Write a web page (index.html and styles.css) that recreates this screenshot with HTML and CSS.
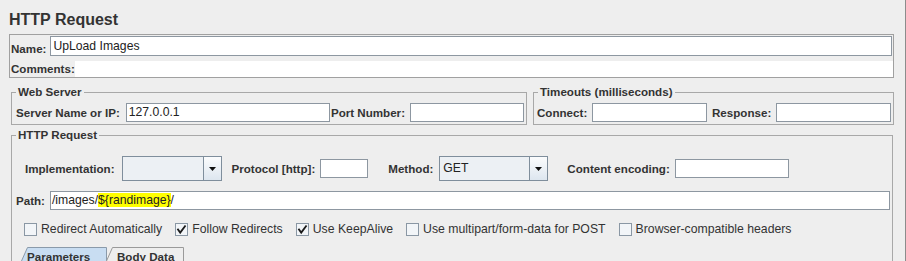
FILE: index.html
```html
<!DOCTYPE html>
<html>
<head>
<meta charset="utf-8">
<title>HTTP Request</title>
<link rel="stylesheet" href="styles.css">
</head>
<body>
<div class="page">
  <h1 class="title">HTTP Request</h1>
  <div class="namepanel">
    <div class="name-row">
      <span class="lbl">Name:</span>
      <div class="field name-field">UpLoad Images</div>
    </div>
    <div class="comments-row">
      <span class="lbl comments-lbl">Comments:</span>
      <div class="textarea"></div>
    </div>
  </div>

  <div class="servers">
    <fieldset class="group web">
      <legend>Web Server</legend>
      <div class="row">
        <span class="lbl">Server Name or IP:</span>
        <div class="field grow gap6">127.0.0.1</div>
        <span class="lbl gap1">Port Number:</span>
        <div class="field w114 gap5"></div>
      </div>
    </fieldset>
    <fieldset class="group timeouts">
      <legend>Timeouts (milliseconds)</legend>
      <div class="row">
        <span class="lbl">Connect:</span>
        <div class="field grow gap5"></div>
        <span class="lbl gap5">Response:</span>
        <div class="field grow gap5"></div>
      </div>
    </fieldset>
  </div>

  <fieldset class="group http">
    <legend>HTTP Request</legend>
    <div class="impl-row">
      <span class="lbl">Implementation:</span>
      <div class="combo impl-combo gap7">
        <span class="combo-text"></span>
        <span class="combo-btn"><svg width="7" height="4" viewBox="0 0 7 4"><polygon points="0,0 7,0 3.5,4" fill="#111"/></svg></span>
      </div>
      <span class="lbl gap10">Protocol [http]:</span>
      <div class="field proto gap5"></div>
      <span class="lbl gap20">Method:</span>
      <div class="combo method-combo gap6">
        <span class="combo-text">GET</span>
        <span class="combo-btn"><svg width="7" height="4" viewBox="0 0 7 4"><polygon points="0,0 7,0 3.5,4" fill="#111"/></svg></span>
      </div>
      <span class="lbl gap19">Content encoding:</span>
      <div class="field enc gap5"></div>
    </div>

    <div class="path-row">
      <span class="lbl">Path:</span>
      <div class="field grow gap5 path-field">/images/<mark class="hl">${randimage}</mark>/</div>
    </div>

    <div class="checks">
      <label class="check">
        <svg class="cb" width="13" height="13" viewBox="0 0 13 13"><rect x="0.5" y="0.5" width="12" height="12" class="cb-box"/></svg>
        <span>Redirect Automatically</span>
      </label>
      <label class="check">
        <svg class="cb" width="13" height="13" viewBox="0 0 13 13"><rect x="0.5" y="0.5" width="12" height="12" class="cb-box"/><path d="M3 6.5 L5.2 9.6 L10 3.2" class="cb-mark"/></svg>
        <span>Follow Redirects</span>
      </label>
      <label class="check">
        <svg class="cb" width="13" height="13" viewBox="0 0 13 13"><rect x="0.5" y="0.5" width="12" height="12" class="cb-box"/><path d="M3 6.5 L5.2 9.6 L10 3.2" class="cb-mark"/></svg>
        <span>Use KeepAlive</span>
      </label>
      <label class="check">
        <svg class="cb" width="13" height="13" viewBox="0 0 13 13"><rect x="0.5" y="0.5" width="12" height="12" class="cb-box"/></svg>
        <span>Use multipart/form-data for POST</span>
      </label>
      <label class="check">
        <svg class="cb" width="13" height="13" viewBox="0 0 13 13"><rect x="0.5" y="0.5" width="12" height="12" class="cb-box"/></svg>
        <span>Browser-compatible headers</span>
      </label>
    </div>

    <div class="tabs">
      <div class="tab tab-params selected">
        <svg class="tab-shape" width="86" height="30" viewBox="0 0 86 30"><polygon points="0.5,14 6.5,0.5 85.5,0.5 85.5,30 0.5,30" class="tab-fill-sel"/></svg>
        <span class="tab-text">Parameters</span>
      </div>
      <div class="tab tab-body">
        <svg class="tab-shape" width="78" height="30" viewBox="0 0 78 30"><polygon points="0.5,14 6.5,0.5 77.5,0.5 77.5,30 0.5,30" class="tab-fill"/></svg>
        <span class="tab-text">Body Data</span>
      </div>
    </div>
  </fieldset>
</div>
</body>
</html>
```

FILE: styles.css
```css
* { box-sizing: border-box; }
html, body { margin: 0; padding: 0; }
body {
  width: 906px;
  height: 261px;
  overflow: hidden;
  background: #eeeeee;
  font-family: "Liberation Sans", Arial, sans-serif;
  font-size: 12px;
  color: #333333;
}
.page {
  height: 261px;
  padding: 0 11px 0 9px;
  border-right: 1px solid #8c8c8c;
  overflow: hidden;
}
.title {
  margin: 0;
  height: 34px;
  padding-top: 10px;
  font-size: 16px;
  line-height: 20px;
  font-weight: bold;
  color: #333333;
}
.lbl {
  font-weight: bold;
  font-size: 11.6px;
  white-space: nowrap;
  line-height: 14px;
}
.field {
  height: 19px;
  background: #ffffff;
  border: 1px solid #8d97a1;
  padding: 0 2px;
  line-height: 17px;
  font-size: 12.2px;
  color: #222222;
  white-space: nowrap;
  overflow: hidden;
}
.grow { flex: 1 1 0; min-width: 0; }
.gap1 { margin-left: 1px; }
.gap5 { margin-left: 5px; }
.gap6 { margin-left: 6px; }
.gap7 { margin-left: 7px; }
.gap10 { margin-left: 10px; }
.gap19 { margin-left: 19px; }
.gap20 { margin-left: 20px; }
.w114 { width: 114px; flex: none; }

/* name / comments */
.namepanel {
  height: 44px;
  border: 1px solid #a0a0a0;
}
.name-row {
  display: flex;
  align-items: flex-end;
  height: 21px;
  padding-left: 1px;
}
.name-field {
  flex: 1 1 0;
  height: 20px;
  line-height: 18px;
  margin-left: 4px;
  margin-right: 1px;
}
.comments-row {
  display: flex;
  align-items: flex-end;
  height: 21px;
  padding-left: 1px;
}
.comments-lbl { line-height: 16px; }
.textarea {
  flex: 1 1 0;
  height: 16px;
  background: #ffffff;
}

/* fieldsets */
.group {
  margin: 0;
  min-width: 0;
  border: 1px solid #a8a8a8;
  padding: 0 2px 2px 4px;
}
.group legend {
  padding: 0 2px;
  font-weight: bold;
  font-size: 11.6px;
  line-height: 14px;
  color: #333333;
}
.servers {
  display: flex;
  gap: 6px;
  width: 883px;
  margin: 7px 0 0 2px;
}
.web { width: 516px; flex: none; }
.timeouts { flex: 1 1 0; padding-left: 3px; }
.timeouts legend { margin-left: 1px; }
.row {
  display: flex;
  align-items: center;
  height: 19px;
  margin-top: 4px;
}

/* http request */
.http {
  width: 882px;
  height: 200px;
  margin: 3px 0 0 2px;
  padding-right: 3px;
}
.impl-row {
  display: flex;
  align-items: center;
  height: 25px;
  margin-top: 14px;
  padding-left: 9px;
}
.combo {
  display: flex;
  height: 25px;
  border: 1px solid #7f8e9c;
  background: #ecf0f4;
  flex: none;
}
.impl-combo { width: 100px; }
.method-combo { width: 109px; }
.combo-text {
  flex: 1 1 0;
  padding-left: 3px;
  line-height: 23px;
  font-size: 12.2px;
  color: #222222;
}
.combo-btn {
  width: 18px;
  display: flex;
  align-items: center;
  justify-content: center;
  border-left: 1px solid #7f8e9c;
  background: linear-gradient(#fbfcfd, #dde6ef);
}
.combo-btn svg { display: block; }
.proto { width: 48px; flex: none; }
.enc { width: 114px; flex: none; }

.path-row {
  display: flex;
  align-items: center;
  height: 19px;
  margin-top: 10px;
}
.path-field { margin-right: -1px; padding-left: 1px; }
.hl { background: #ffff00; color: inherit; }

.checks {
  display: flex;
  align-items: center;
  height: 14px;
  margin-top: 12px;
  padding-left: 8px;
  gap: 13px;
  font-size: 12.25px;
  color: #333333;
}
.check {
  display: flex;
  align-items: center;
  gap: 4px;
  white-space: nowrap;
}
.cb { display: block; flex: none; }
.cb-box { fill: #f2f5f8; stroke: #8a97a4; stroke-width: 1; }
.cb-mark { fill: none; stroke: #1a1a1a; stroke-width: 1.8; stroke-linecap: square; }

.tabs {
  display: flex;
  margin-top: 11px;
  padding-left: 5px;
  height: 30px;
}
.tab {
  position: relative;
  height: 30px;
  flex: none;
}
.tab-params { width: 86px; }
.tab-body { width: 78px; margin-left: -1px; }
.tab-shape { position: absolute; left: 0; top: 0; }
.tab-fill-sel { fill: #c8ddf2; stroke: #8a9aaa; stroke-width: 1; }
.tab-fill { fill: #eeeeee; stroke: #9a9a9a; stroke-width: 1; }
.tab-text {
  position: relative;
  display: block;
  padding-top: 3px;
  font-weight: bold;
  font-size: 11.6px;
  line-height: 14px;
  color: #333333;
}
.tab-params .tab-text { padding-left: 6px; }
.tab-body .tab-text { padding-left: 11px; }
```
